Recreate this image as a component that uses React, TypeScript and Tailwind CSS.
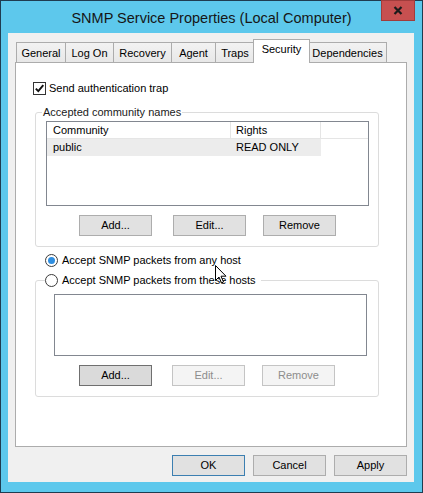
import React from 'react';

type Tab = { label: string; w: string; active?: boolean };

const tabs: Tab[] = [
  { label: 'General', w: 'w-[50px]' },
  { label: 'Log On', w: 'w-[49px]' },
  { label: 'Recovery', w: 'w-[59px]' },
  { label: 'Agent', w: 'w-[45px]' },
  { label: 'Traps', w: 'w-[40px]' },
  { label: 'Security', w: 'w-[57px]', active: true },
  { label: 'Dependencies', w: 'w-[79px]' },
];

const Button = ({
  label,
  className = '',
  disabled = false,
  variant = 'normal',
}: {
  label: string;
  className?: string;
  disabled?: boolean;
  variant?: 'normal' | 'default' | 'focus';
}) => {
  const look = disabled
    ? 'bg-[#f4f4f4] border-[#c4c4c4] text-[#8d8d8d]'
    : variant === 'default'
      ? 'bg-[#e1e1e1] border-[#3c7fb1] text-black'
      : variant === 'focus'
        ? 'bg-[#dadada] border-[#6f6f6f] text-black'
        : 'bg-[#e1e1e1] border-[#adadad] text-black';
  return (
    <div className={`w-[73px] h-[21px] border flex items-center justify-center ${look} ${className}`}>{label}</div>
  );
};

const Radio = ({ checked }: { checked?: boolean }) => (
  <span className="w-[13px] h-[13px] rounded-full border border-[#3b3b3b] bg-white flex items-center justify-center shrink-0">
    {checked && <span className="w-[7px] h-[7px] rounded-full bg-[#2f8ee0]" />}
  </span>
);

export default function App() {
  return (
    <div className="relative w-[423px] h-[493px] bg-[#5dc8ec] border border-[#1f3c50] flex flex-col font-['Liberation_Sans',Arial,sans-serif] text-[11px] text-black leading-none">
      {/* title bar */}
      <div className="h-[32px] flex items-center justify-center pt-[2px] text-[14.5px] text-[#161616]">
        SNMP Service Properties (Local Computer)
      </div>
      <div className="absolute top-[-1px] left-[380px] w-[34px] h-[21px] bg-[#c75050] border border-[#a13c3c] flex items-center justify-center">
        <svg width="10" height="9" viewBox="0 0 10 9">
          <path d="M1.5 1 L8.5 8 M8.5 1 L1.5 8" stroke="#1b1b1b" strokeWidth="2.2" />
        </svg>
      </div>

      {/* client area */}
      <div className="ml-[7px] w-[406px] h-[449px] bg-[#f0f0f0] pl-[7px] pt-[6px] flex flex-col">
        {/* tab strip */}
        <div className="h-[23px] flex items-end pl-[1px]">
          {tabs.map((t, i) =>
            t.active ? (
              <div
                key={t.label}
                className={`${t.w} h-[24px] -mb-px -ml-[2px] -mr-[1px] relative z-10 bg-white border border-b-0 border-[#acacac] flex items-start justify-center pt-[4px]`}
              >
                {t.label}
              </div>
            ) : (
              <div
                key={t.label}
                className={`${t.w} h-[20px] ${i > 0 ? '-ml-px' : ''} bg-gradient-to-b from-[#f2f2f2] to-[#e8e8e8] border border-b-0 border-[#acacac] flex items-center justify-center pt-[2px]`}
              >
                {t.label}
              </div>
            )
          )}
        </div>

        {/* tab panel */}
        <div className="w-[392px] h-[385px] bg-white border border-[#acacac] flex flex-col">
          <div className="mt-[19px] ml-[17px] flex items-center h-[13px]">
            <span className="w-[13px] h-[13px] border border-[#333] bg-white flex items-center justify-center">
              <svg width="11" height="11" viewBox="0 0 11 11">
                <path d="M1.8 5.6 L4.3 8.2 L9.3 2.2" fill="none" stroke="#111" strokeWidth="1.9" />
              </svg>
            </span>
            <span className="ml-[3px]">Send authentication trap</span>
          </div>

          {/* accepted community names */}
          <fieldset className="mt-[10px] ml-[19px] w-[344px] border border-[#dcdcdc] rounded-[3px] pb-[10px]">
            <legend className="ml-[6px] px-[1px] h-[14px] leading-[14px] text-[#1a1a1a]">Accepted community names</legend>
            <div className="mt-[2px] ml-[10px] w-[323px] h-[85px] border border-[#828790] bg-white flex flex-col">
              <div className="h-[17px] flex border-b border-[#e5e5e5]">
                <div className="w-[184px] border-r border-[#e5e5e5] pl-[6px] flex items-center">Community</div>
                <div className="w-[90px] border-r border-[#e5e5e5] pl-[5px] flex items-center">Rights</div>
              </div>
              <div className="h-[17px] w-[274px] bg-[#ececec] flex">
                <div className="w-[184px] pl-[6px] flex items-center">public</div>
                <div className="pl-[5px] flex items-center">READ ONLY</div>
              </div>
            </div>
            <div className="mt-[9px] flex">
              <Button label="Add..." className="ml-[43px]" />
              <Button label="Edit..." className="ml-[21px]" />
              <Button label="Remove" className="ml-[17px]" />
            </div>
          </fieldset>

          <div className="mt-[7px] ml-[29px] flex items-center h-[13px]">
            <Radio checked />
            <span className="ml-[4px]">Accept SNMP packets from any host</span>
          </div>

          {/* permitted hosts */}
          <fieldset className="mt-[6px] ml-[19px] w-[344px] border border-[#dcdcdc] rounded-[3px] pb-[10px]">
            <legend className="ml-[9px] pr-[5px] h-[14px] flex items-center">
              <Radio />
              <span className="ml-[4px]">Accept SNMP packets from these hosts</span>
            </legend>
            <div className="mt-[7px] ml-[18px] w-[313px] h-[62px] border border-[#828790] bg-white" />
            <div className="mt-[9px] flex">
              <Button label="Add..." className="ml-[43px]" variant="focus" />
              <Button label="Edit..." className="ml-[20px]" disabled />
              <Button label="Remove" className="ml-[17px]" disabled />
            </div>
          </fieldset>
        </div>

        {/* dialog buttons */}
        <div className="mt-[8px] w-[392px] flex justify-end gap-[8px]">
          <Button label="OK" variant="default" />
          <Button label="Cancel" />
          <Button label="Apply" />
        </div>
      </div>

      {/* mouse pointer */}
      <svg className="absolute left-[214px] top-[264px]" width="12" height="19" viewBox="0 0 12 19">
        <path d="M0.5 0.5 L0.5 15.5 L4 12 L6.5 18 L8.5 17 L6 11.2 L11 11.2 Z" fill="#fff" stroke="#000" strokeWidth="1" />
      </svg>
    </div>
  );
}
